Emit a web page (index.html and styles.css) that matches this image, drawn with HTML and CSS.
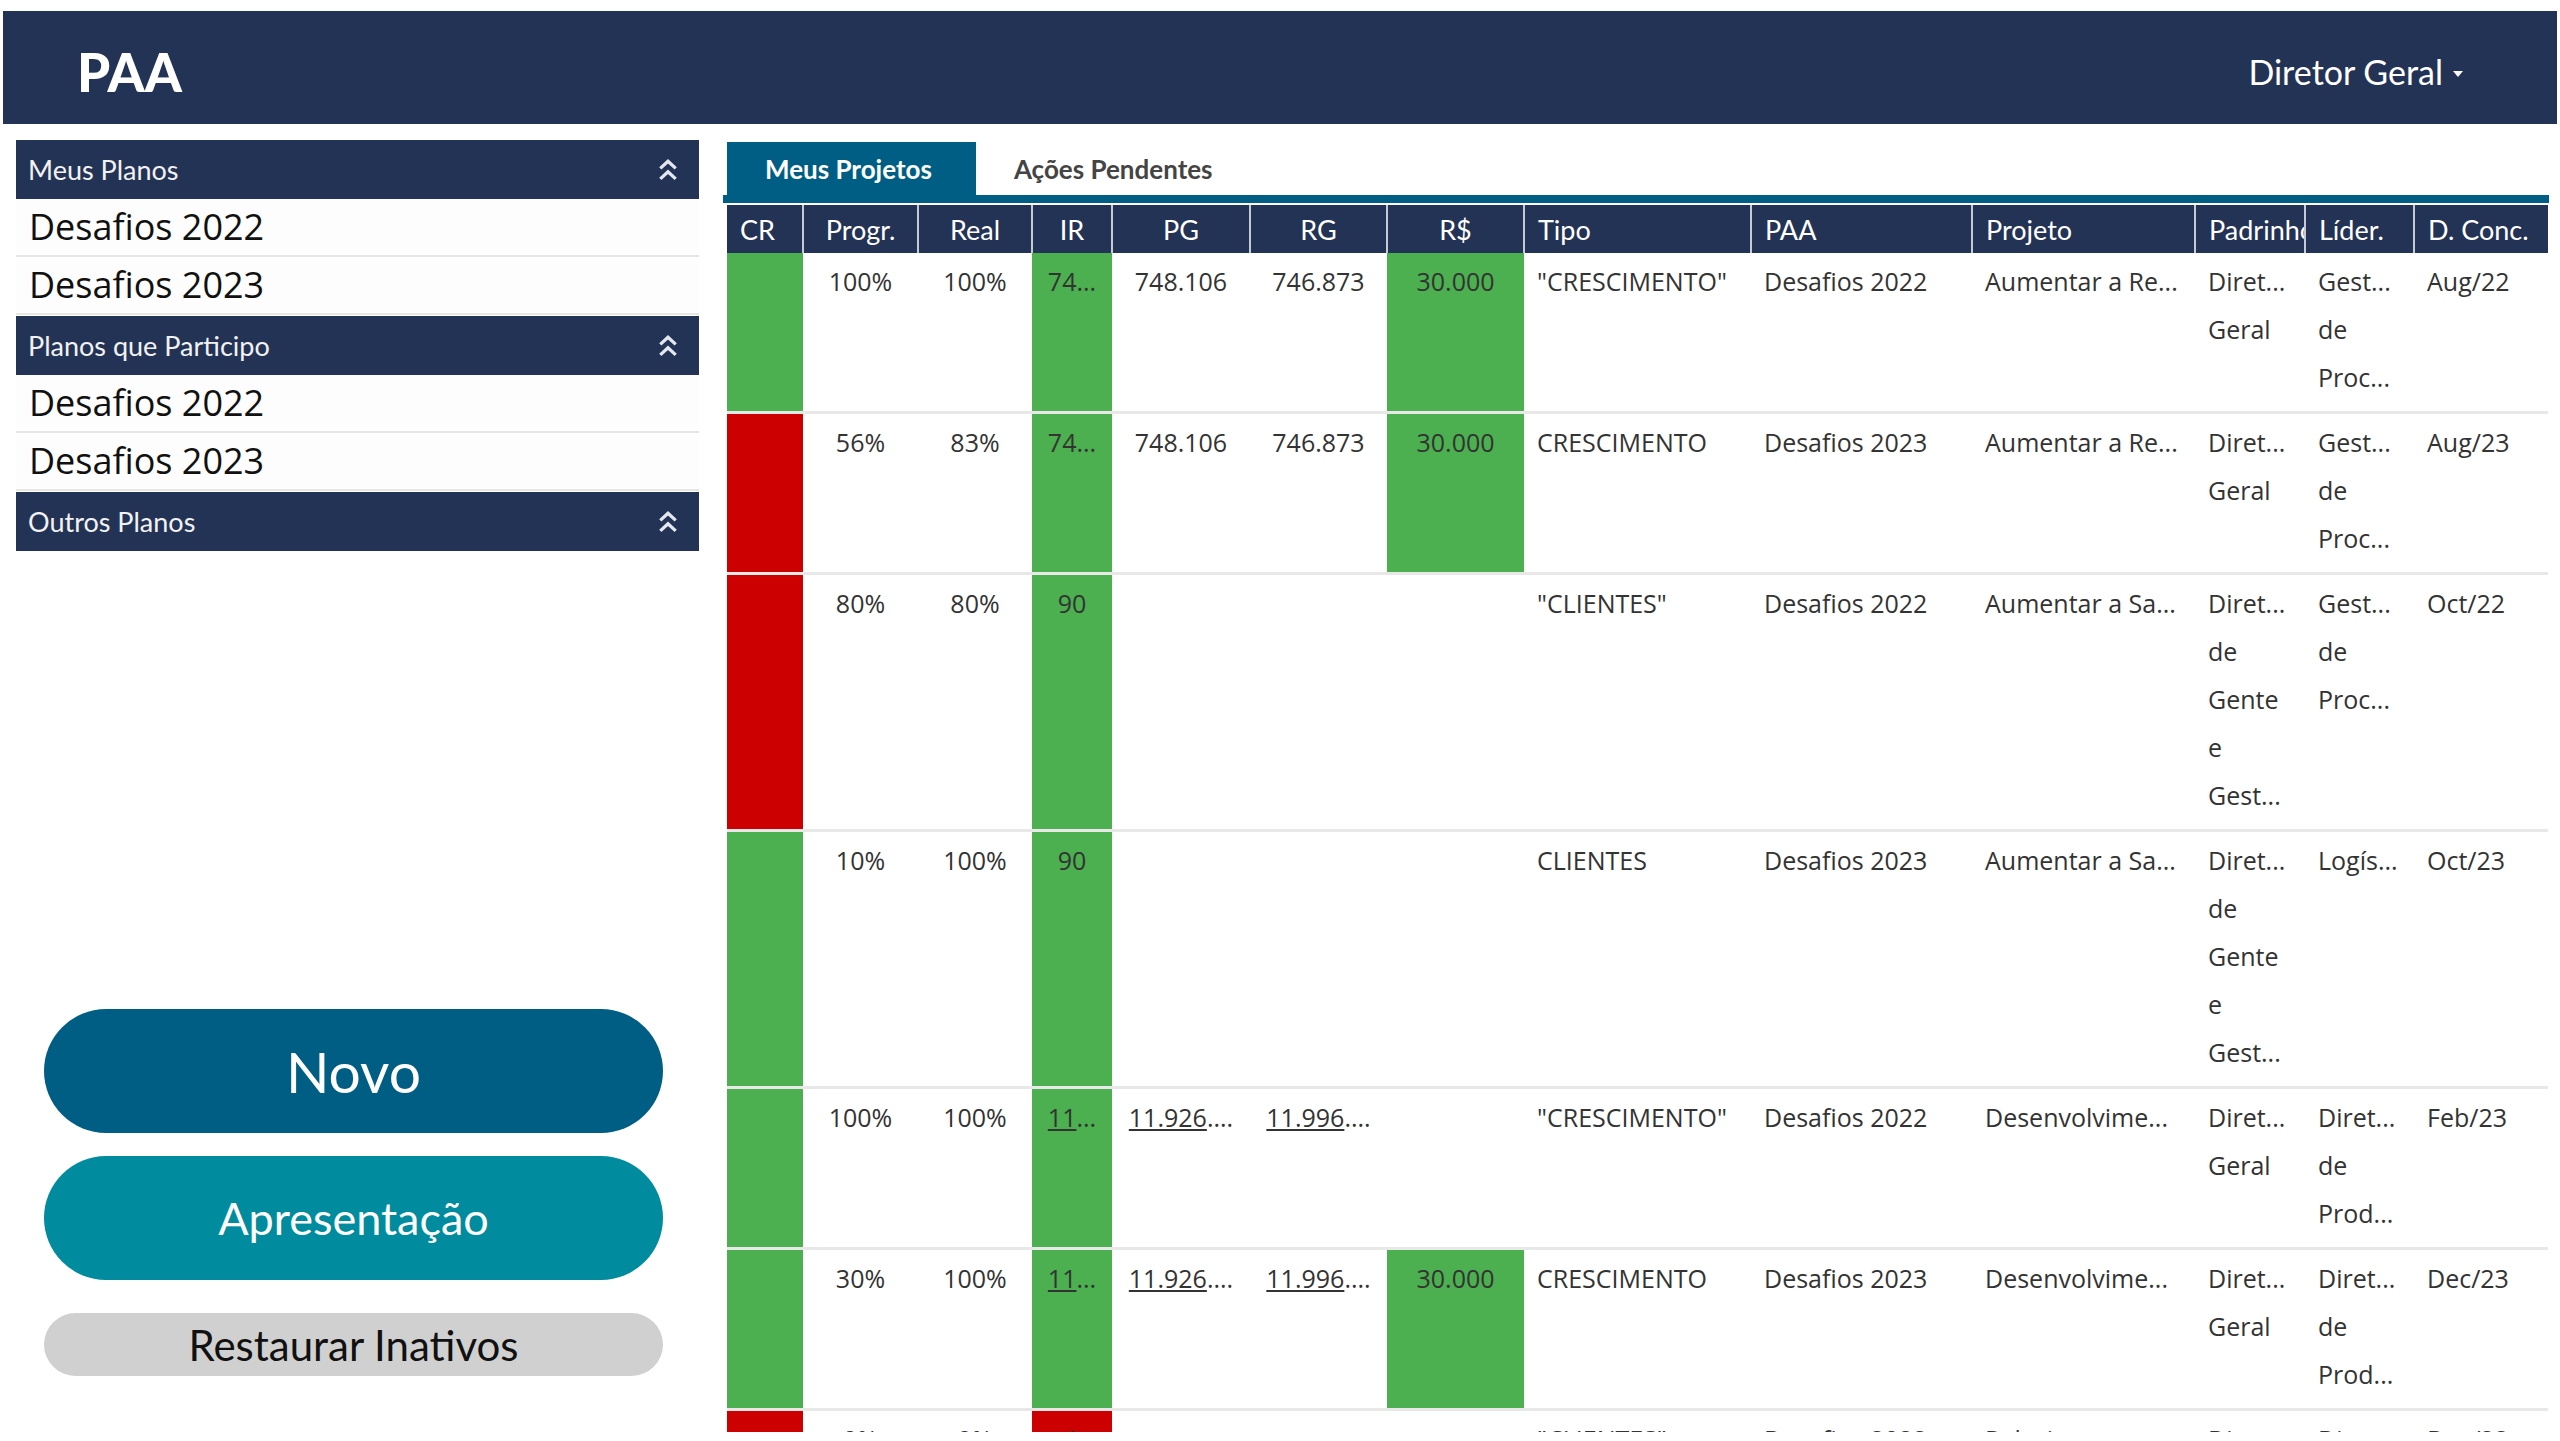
FILE: index.html
```html
<!DOCTYPE html>
<html lang="pt-BR">
<head>
    <meta charset="UTF-8">
    <meta name="viewport" content="width=device-width, initial-scale=1.0">
    <title>PAA</title>
    <link rel="stylesheet" href="styles.css">
</head>
<body>
<div class="page">
    <header class="topbar">
        <div class="brand">PAA</div>
        <div class="user-menu">Diretor Geral <span class="caret"></span></div>
    </header>

    <div class="content">
        <aside class="sidebar">
            <div class="plan-group">
                <div class="group-head">
                    <span>Meus Planos</span>
                    <svg class="collapse" viewBox="0 0 20 22"><path d="M3 10 L10 3.5 L17 10 M3 19.5 L10 13 L17 19.5"/></svg>
                </div>
                <a class="plan-item" href="#">Desafios 2022</a>
                <a class="plan-item" href="#">Desafios 2023</a>
            </div>
            <div class="plan-group">
                <div class="group-head">
                    <span>Planos que Participo</span>
                    <svg class="collapse" viewBox="0 0 20 22"><path d="M3 10 L10 3.5 L17 10 M3 19.5 L10 13 L17 19.5"/></svg>
                </div>
                <a class="plan-item" href="#">Desafios 2022</a>
                <a class="plan-item" href="#">Desafios 2023</a>
            </div>
            <div class="plan-group">
                <div class="group-head">
                    <span>Outros Planos</span>
                    <svg class="collapse" viewBox="0 0 20 22"><path d="M3 10 L10 3.5 L17 10 M3 19.5 L10 13 L17 19.5"/></svg>
                </div>
            </div>

            <div class="actions">
                <button class="btn btn-new">Novo</button>
                <button class="btn btn-present">Apresentação</button>
                <button class="btn btn-restore">Restaurar Inativos</button>
            </div>
        </aside>

        <main class="main">
            <nav class="tabs">
                <a class="tab active" href="#">Meus Projetos</a>
                <a class="tab" href="#">Ações Pendentes</a>
            </nav>
            <div class="table-wrap">
                <table class="projects">
                    <colgroup>
                        <col style="width:76px"><col style="width:115px"><col style="width:114px">
                        <col style="width:80px"><col style="width:138px"><col style="width:137px">
                        <col style="width:137px"><col style="width:227px"><col style="width:221px">
                        <col style="width:223px"><col style="width:110px"><col style="width:109px">
                        <col style="width:134px">
                    </colgroup>
                    <thead>
                        <tr>
                            <th>CR</th><th class="c">Progr.</th><th class="c">Real</th><th class="c">IR</th>
                            <th class="c">PG</th><th class="c">RG</th><th class="c">R$</th><th>Tipo</th>
                            <th>PAA</th><th>Projeto</th><th>Padrinho</th><th>Líder.</th><th>D. Conc.</th>
                        </tr>
                    </thead>
                    <tbody>
                        <tr>
                            <td class="ok"></td><td class="c">100%</td><td class="c">100%</td><td class="c ok">74...</td>
                            <td class="c">748.106</td><td class="c">746.873</td><td class="c ok">30.000</td>
                            <td class="nw">"CRESCIMENTO"</td><td class="nw">Desafios 2022</td><td class="nw">Aumentar a Re...</td>
                            <td>Diret... Geral</td><td>Gest... de Proc...</td><td class="nw">Aug/22</td>
                        </tr>
                        <tr>
                            <td class="bad"></td><td class="c">56%</td><td class="c">83%</td><td class="c ok">74...</td>
                            <td class="c">748.106</td><td class="c">746.873</td><td class="c ok">30.000</td>
                            <td class="nw">CRESCIMENTO</td><td class="nw">Desafios 2023</td><td class="nw">Aumentar a Re...</td>
                            <td>Diret... Geral</td><td>Gest... de Proc...</td><td class="nw">Aug/23</td>
                        </tr>
                        <tr>
                            <td class="bad"></td><td class="c">80%</td><td class="c">80%</td><td class="c ok">90</td>
                            <td></td><td></td><td></td>
                            <td class="nw">"CLIENTES"</td><td class="nw">Desafios 2022</td><td class="nw">Aumentar a Sa...</td>
                            <td>Diret... de Gente e Gest...</td><td>Gest... de Proc...</td><td class="nw">Oct/22</td>
                        </tr>
                        <tr>
                            <td class="ok"></td><td class="c">10%</td><td class="c">100%</td><td class="c ok">90</td>
                            <td></td><td></td><td></td>
                            <td class="nw">CLIENTES</td><td class="nw">Desafios 2023</td><td class="nw">Aumentar a Sa...</td>
                            <td>Diret... de Gente e Gest...</td><td>Logís...</td><td class="nw">Oct/23</td>
                        </tr>
                        <tr>
                            <td class="ok"></td><td class="c">100%</td><td class="c">100%</td><td class="c ok"><a href="#">11</a>...</td>
                            <td class="c"><a href="#">11.926</a>....</td><td class="c"><a href="#">11.996</a>....</td><td></td>
                            <td class="nw">"CRESCIMENTO"</td><td class="nw">Desafios 2022</td><td class="nw">Desenvolvime...</td>
                            <td>Diret... Geral</td><td>Diret... de Prod...</td><td class="nw">Feb/23</td>
                        </tr>
                        <tr>
                            <td class="ok"></td><td class="c">30%</td><td class="c">100%</td><td class="c ok"><a href="#">11</a>...</td>
                            <td class="c"><a href="#">11.926</a>....</td><td class="c"><a href="#">11.996</a>....</td><td class="c ok">30.000</td>
                            <td class="nw">CRESCIMENTO</td><td class="nw">Desafios 2023</td><td class="nw">Desenvolvime...</td>
                            <td>Diret... Geral</td><td>Diret... de Prod...</td><td class="nw">Dec/23</td>
                        </tr>
                        <tr>
                            <td class="bad"></td><td class="c">0%</td><td class="c">0%</td><td class="c bad">1</td>
                            <td></td><td></td><td></td>
                            <td class="nw">"CLIENTES"</td><td class="nw">Desafios 2022</td><td class="nw">Relacionamento...</td>
                            <td>Diret... Geral</td><td>Diret... de Rel...</td><td class="nw">Dec/22</td>
                        </tr>
                    </tbody>
                </table>
            </div>
        </main>
    </div>
</div>
</body>
</html>
```

FILE: styles.css
```css
* {
    box-sizing: border-box;
}
html, body {
    margin: 0;
    background: #fff;
}
body {
    font-family: "Open Sans", sans-serif;
    color: #333;
}
.page {
    height: 1441px;
    padding: 11px 3px 0;
    overflow: hidden;
}

/* top bar */
.topbar {
    height: 113px;
    background: #233356;
    color: #fff;
    display: flex;
    align-items: center;
    justify-content: space-between;
    padding: 8px 94px 0 74px;
}
.brand {
    font-family: Lato, sans-serif;
    font-weight: 900;
    font-size: 53px;
}
.user-menu {
    font-family: Lato, sans-serif;
    font-size: 34px;
    display: flex;
    align-items: center;
    gap: 10px;
}
.caret {
    border-left: 5px solid transparent;
    border-right: 5px solid transparent;
    border-top: 6px solid #fff;
    margin-top: 4px;
}

/* layout */
.content {
    display: flex;
    gap: 24px;
    padding: 0 8px 0 13px;
    margin-top: 16px;
    height: 1292px;
}
.sidebar {
    width: 683px;
    flex-shrink: 0;
    display: flex;
    flex-direction: column;
}
.main {
    flex: 1;
    min-width: 0;
}

/* plan lists */
.plan-group + .plan-group {
    margin-top: 1px;
}
.group-head {
    height: 59px;
    background: #233356;
    color: #f2f2f2;
    font-family: Lato, sans-serif;
    font-size: 27px;
    display: flex;
    align-items: center;
    justify-content: space-between;
    padding: 0 20px 0 12px;
}
.collapse {
    width: 22px;
    height: 25px;
    fill: none;
    stroke: #e4e7ee;
    stroke-width: 3;
}
.plan-item {
    display: block;
    height: 58px;
    line-height: 56px;
    padding-left: 13px;
    font-size: 36px;
    color: #111;
    text-decoration: none;
    background: #fdfdfd;
    border-bottom: 2px solid #e6e6e6;
}

/* sidebar buttons */
.actions {
    margin-top: auto;
    display: flex;
    flex-direction: column;
    padding: 0 36px 56px 28px;
}
.btn {
    border: none;
    width: 100%;
    font-family: Lato, sans-serif;
    cursor: pointer;
}
.btn-new {
    height: 124px;
    border-radius: 62px;
    background: #005e85;
    color: #fff;
    font-size: 57px;
}
.btn-present {
    height: 124px;
    border-radius: 62px;
    margin-top: 23px;
    background: #008b9e;
    color: #fff;
    font-size: 45px;
}
.btn-restore {
    height: 63px;
    border-radius: 32px;
    margin-top: 33px;
    background: #d0d0d0;
    color: #111;
    font-size: 42px;
}

/* tabs */
.tabs {
    display: flex;
    margin-top: 2px;
    padding-left: 4px;
    border-bottom: 8px solid #005e85;
}
.tab {
    height: 53px;
    padding: 0 40px 0 38px;
    display: flex;
    align-items: center;
    font-family: Lato, sans-serif;
    font-weight: 700;
    font-size: 26px;
    color: #444;
    text-decoration: none;
}
.tab.active {
    background: #005e85;
    color: #fff;
    padding-right: 44px;
}

/* projects table */
.table-wrap {
    margin: 2px 0 0 4px;
    height: 1227px;
    overflow: hidden;
}
.projects {
    width: 1821px;
    table-layout: fixed;
    border-collapse: collapse;
}
.projects th {
    height: 48px;
    background: #233356;
    color: #fff;
    font-family: Lato, sans-serif;
    font-weight: 400;
    font-size: 27px;
    text-align: left;
    padding: 0 13px;
    border-left: 2px solid #c5cad4;
    white-space: nowrap;
    overflow: hidden;
}
.projects th:first-child {
    border-left: none;
}
.projects th.c {
    text-align: center;
    padding: 0 4px;
}
.projects td {
    font-size: 25px;
    line-height: 48px;
    padding: 4px 13px 10px;
    vertical-align: top;
    border-bottom: 3px solid #e8e8e8;
    color: #333;
}
.projects td.c {
    text-align: center;
    padding-left: 4px;
    padding-right: 4px;
    white-space: nowrap;
    overflow: hidden;
}
.projects td.nw {
    white-space: nowrap;
    overflow: hidden;
}
.projects td.ok {
    background: #4caf50;
}
.projects td.bad {
    background: #cc0000;
}
.projects td a {
    color: #333;
}
```
